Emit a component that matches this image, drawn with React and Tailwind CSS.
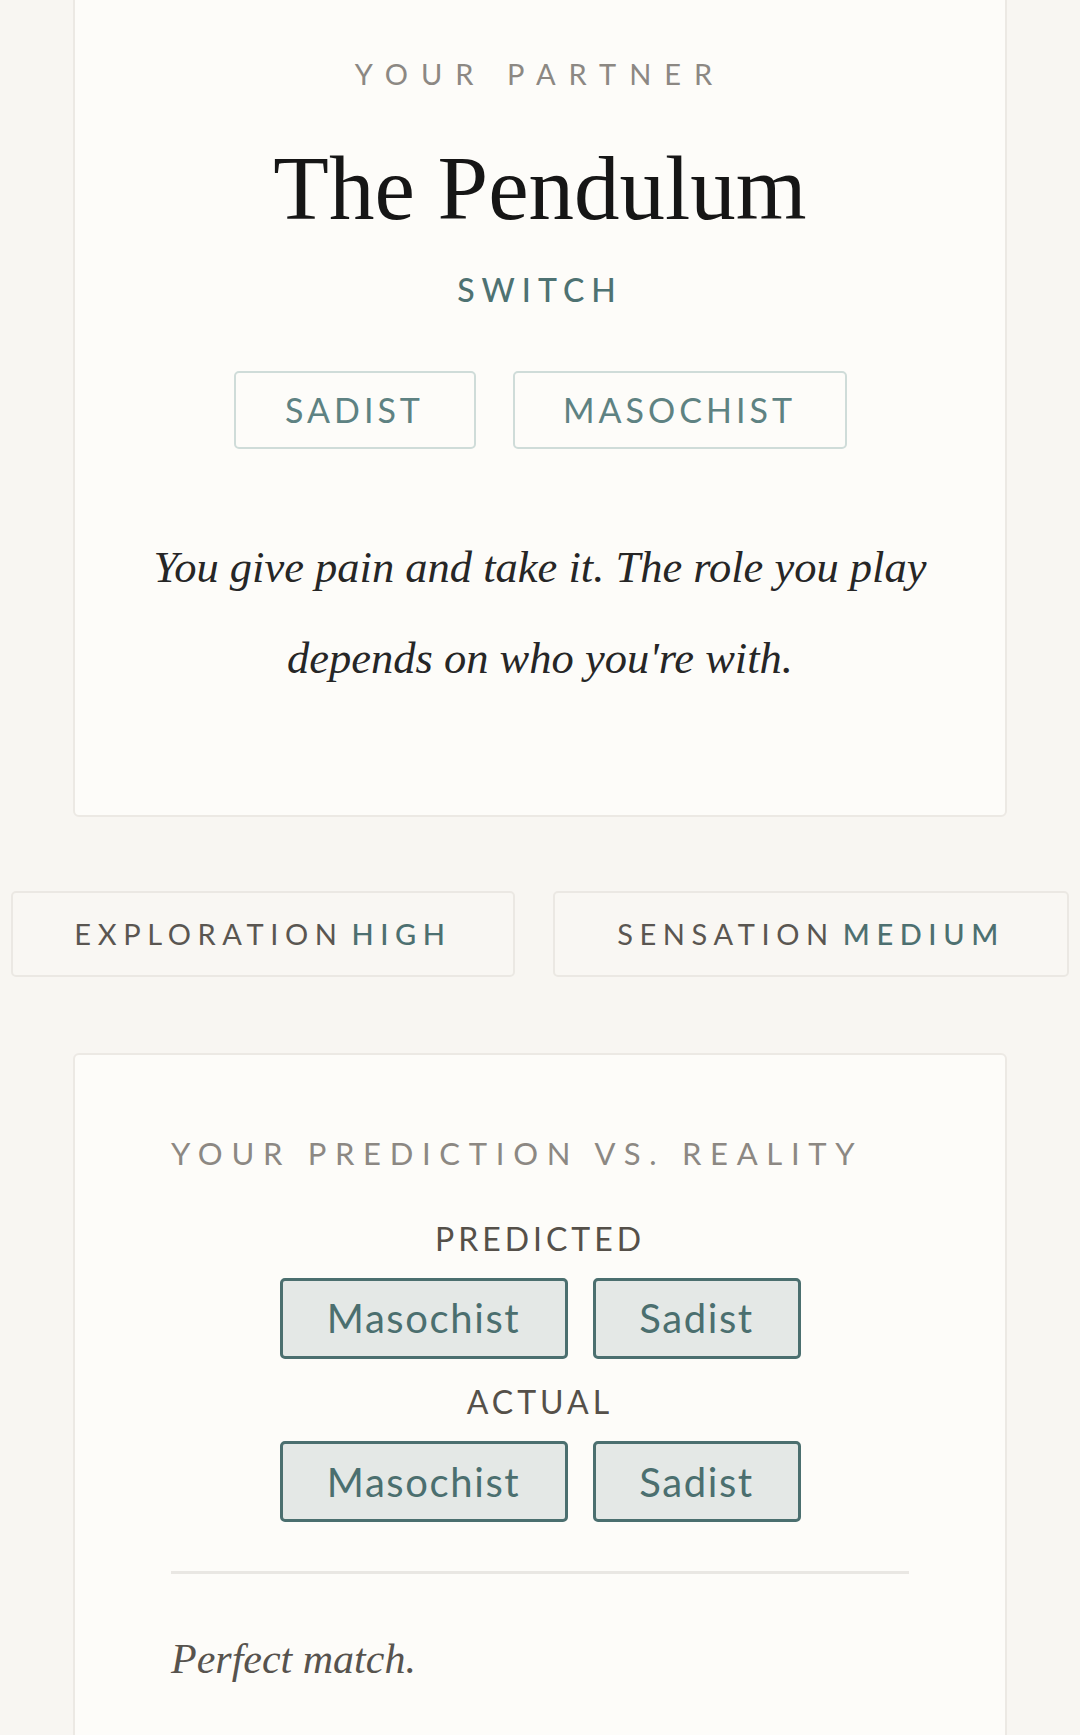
export default function App() {
  return (
    <div className="h-[1735px] overflow-hidden bg-[#f8f6f2] [font-family:Lato,sans-serif]">
      <div className="mx-auto -mt-[40px] flex w-[934px] flex-col items-center rounded-[6px] border-2 border-[#ece9e4] bg-[#fdfcf9] pt-[95px] pb-[111px]">
        <p className="text-[29px] leading-[1.2] tracking-[13px] text-[#8c8883]">YOUR PARTNER</p>
        <h1 className="mt-[51px] text-[91px] leading-none text-[#161616] [font-family:Liberation_Serif,serif]">
          The Pendulum
        </h1>
        <p className="mt-[37px] text-[32px] font-medium leading-[1.2] tracking-[7px] text-[#4e7272]">SWITCH</p>
        <div className="mt-[62px] flex gap-[37px]">
          <span className="flex h-[78px] w-[242px] items-center justify-center rounded-[5px] border-2 border-[#cfdcd9] text-[34px] leading-[1.2] tracking-[4px] text-[#5e8282]">
            SADIST
          </span>
          <span className="flex h-[78px] w-[334px] items-center justify-center rounded-[5px] border-2 border-[#cfdcd9] text-[34px] leading-[1.2] tracking-[4px] text-[#5e8282]">
            MASOCHIST
          </span>
        </div>
        <p className="mt-[73px] w-[800px] text-center text-[44.5px] italic leading-[91px] text-[#262626] [font-family:Liberation_Serif,serif]">
          You give pain and take it. The role you play depends on who you're with.
        </p>
      </div>

      <div className="mt-[74px] flex justify-center gap-[38px]">
        <div className="flex h-[86px] w-[504px] items-center justify-center rounded-[5px] border-2 border-[#ebe8e3] bg-[#f9f7f3] text-[29px] leading-[1.2] tracking-[6.6px]">
          <span className="text-[#5a5651]">EXPLORATION</span>
          <span className="ml-[8px] font-medium text-[#4d7070]">HIGH</span>
        </div>
        <div className="flex h-[86px] w-[516px] items-center justify-center rounded-[5px] border-2 border-[#ebe8e3] bg-[#f9f7f3] text-[29px] leading-[1.2] tracking-[6.6px]">
          <span className="text-[#5a5651]">SENSATION</span>
          <span className="ml-[8px] font-medium text-[#4d7070]">MEDIUM</span>
        </div>
      </div>

      <div className="mx-auto mt-[76px] w-[934px] rounded-[6px] border-2 border-[#ece9e4] bg-[#fdfcf9] px-[96px] pt-[80px] pb-[80px]">
        <p className="text-[31px] leading-[1.2] tracking-[8.7px] text-[#8c8883]">YOUR PREDICTION VS. REALITY</p>

        <p className="mt-[48px] text-center text-[32px] leading-[1.2] tracking-[4px] text-[#555049]">PREDICTED</p>
        <div className="mt-[19px] flex justify-center gap-[25px]">
          <span className="flex h-[81px] w-[288px] items-center justify-center rounded-[5px] border-[3px] border-[#4b6f6f] bg-[#e4e8e6] text-[40px] leading-[1.2] tracking-[1.6px] text-[#4b6f6f]">
            Masochist
          </span>
          <span className="flex h-[81px] w-[208px] items-center justify-center rounded-[5px] border-[3px] border-[#4b6f6f] bg-[#e4e8e6] text-[40px] leading-[1.2] tracking-[1.6px] text-[#4b6f6f]">
            Sadist
          </span>
        </div>

        <p className="mt-[24px] text-center text-[32px] leading-[1.2] tracking-[4px] text-[#555049]">ACTUAL</p>
        <div className="mt-[20px] flex justify-center gap-[25px]">
          <span className="flex h-[81px] w-[288px] items-center justify-center rounded-[5px] border-[3px] border-[#4b6f6f] bg-[#e4e8e6] text-[40px] leading-[1.2] tracking-[1.6px] text-[#4b6f6f]">
            Masochist
          </span>
          <span className="flex h-[81px] w-[208px] items-center justify-center rounded-[5px] border-[3px] border-[#4b6f6f] bg-[#e4e8e6] text-[40px] leading-[1.2] tracking-[1.6px] text-[#4b6f6f]">
            Sadist
          </span>
        </div>

        <div className="mt-[49px] h-[3px] bg-[#e9e7e3]" />

        <p className="mt-[60px] text-[42px] italic leading-[1.2] text-[#57534e] [font-family:Liberation_Serif,serif]">
          Perfect match.
        </p>
      </div>
    </div>
  );
}
